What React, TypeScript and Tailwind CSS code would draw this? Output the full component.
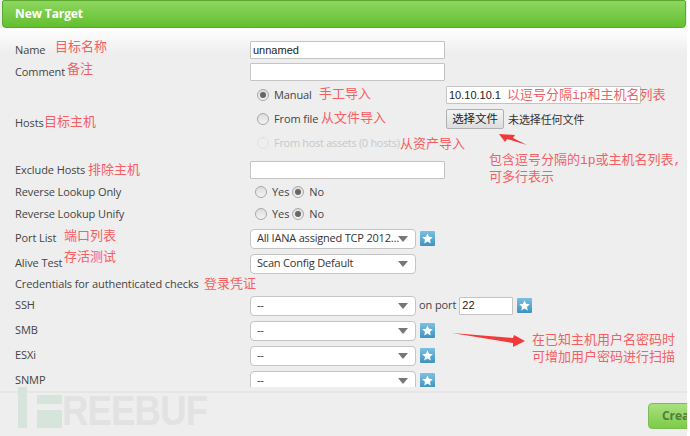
import type { ReactNode } from 'react';

const NOTES = [
  { text: '目标名称', x: 55, y: 40 },
  { text: '备注', x: 67, y: 62 },
  { text: '目标主机', x: 44, y: 115 },
  { text: '手工导入', x: 319, y: 87 },
  { text: '从文件导入', x: 321, y: 111 },
  { text: '从资产导入', x: 400, y: 137 },
  { text: '以逗号分隔ip和主机名列表', x: 507, y: 88 },
  { text: '包含逗号分隔的ip或主机名列表,', x: 489, y: 153 },
  { text: '可多行表示', x: 489, y: 170 },
  { text: '排除主机', x: 88, y: 163 },
  { text: '端口列表', x: 64, y: 229 },
  { text: '存活测试', x: 64, y: 250 },
  { text: '登录凭证', x: 204, y: 277 },
  { text: '在已知主机用户名密码时', x: 532, y: 333 },
  { text: '可增加用户密码进行扫描', x: 532, y: 350 },
];

function Row({ label, className, children }: { label: string; className: string; children?: ReactNode }) {
  return (
    <div className={`flex items-center ${className}`}>
      <div className="w-[235px] shrink-0">{label}</div>
      {children}
    </div>
  );
}

function TextBox({ value, className = 'w-[195px]' }: { value?: string; className?: string }) {
  return (
    <div className={`h-[18px] bg-white border border-[#c4c4c4] rounded-[1px] pl-[2px] flex items-center text-[11px] tracking-normal text-[#222] font-['Liberation_Sans',sans-serif] ${className}`}>
      {value}
    </div>
  );
}

function Radio({ on, faint }: { on?: boolean; faint?: boolean }) {
  return (
    <span
      className={`w-[12px] h-[12px] rounded-full border flex items-center justify-center shrink-0 ${
        faint ? 'border-[#e2e2e2] bg-[#eee]' : 'border-[#a8a8a8] bg-gradient-to-b from-[#dcdcdc] to-[#f4f4f4]'
      }`}
    >
      {on && <span className="w-[6px] h-[6px] rounded-full bg-[#666]" />}
    </span>
  );
}

function YesNo() {
  return (
    <div className="flex items-center ml-[5px]">
      <Radio />
      <span className="ml-[5px]">Yes</span>
      <span className="ml-[3px]"><Radio on /></span>
      <span className="ml-[5px]">No</span>
    </div>
  );
}

function Dropdown({ value }: { value: string }) {
  return (
    <div className="relative w-[166px] h-[20px] bg-white border border-[#c4c4c4] rounded-[4px] pl-[6px] flex items-center whitespace-nowrap text-[#333]">
      <span className="w-[144px] truncate tracking-[-0.2px]">{value}</span>
      <span className="absolute right-[7px] top-[6px] w-0 h-0 border-x-[5px] border-x-transparent border-t-[6px] border-t-[#777]" />
    </div>
  );
}

function StarButton() {
  return (
    <span className="w-[15px] h-[15px] ml-[4px] rounded-[1px] bg-gradient-to-b from-[#7cc0e2] to-[#3c93bf] flex items-center justify-center shrink-0">
      <svg width="11" height="11" viewBox="0 0 24 24" fill="#fff">
        <polygon points="12,1 15.4,8.4 23.5,9.3 17.5,14.8 19.1,22.8 12,18.8 4.9,22.8 6.5,14.8 0.5,9.3 8.6,8.4" />
      </svg>
    </span>
  );
}

export default function App() {
  return (
    <div className="relative w-[690px] h-[436px] overflow-hidden bg-white text-[#444] text-[11px] tracking-[-0.1px] font-['Open_Sans','Noto_Sans',sans-serif]">
      <div className="w-[687px] h-full overflow-hidden bg-[#eeeeee]">
        <div className="ml-[2px] h-[28px] w-[684px] rounded-[4px] rounded-t-[2px] border border-[#5aa82e] bg-gradient-to-b from-[#8ed65f] to-[#62c02c] pl-[12px] flex items-center text-white font-bold text-[12px]">
          New Target
        </div>

        <div className="h-[359px] overflow-hidden pl-[15px] pt-[11px] bg-gradient-to-b from-white to-[#eeeeee] to-[7%]">
          <Row label="Name" className="h-[22px]"><TextBox value="unnamed" /></Row>
          <Row label="Comment" className="h-[22px]"><TextBox /></Row>

          <div className="flex h-[72px]">
            <div className="w-[235px] shrink-0 pt-[32px]">Hosts</div>
            <div className="relative flex-1">
              <div className="flex items-center h-[24px] ml-[7px]">
                <Radio on />
                <span className="ml-[5px] w-[172px]">Manual</span>
                <TextBox value="10.10.10.1" className="w-[195px]" />
              </div>
              <div className="flex items-center h-[24px] ml-[7px]">
                <Radio />
                <span className="ml-[5px] w-[172px]">From file</span>
                <div className="h-[20px] w-[58px] border border-[#b0b0b0] rounded-[2px] bg-gradient-to-b from-[#f4f4f4] to-[#dddddd] flex items-center justify-center text-[11.5px] text-[#222] font-['Noto_Sans_CJK_SC',sans-serif]">
                  选择文件
                </div>
                <span className="ml-[4px] text-[#333] font-['Noto_Sans_CJK_SC',sans-serif]">未选择任何文件</span>
              </div>
              <div className="flex items-center h-[24px] ml-[7px] text-[#c8c8c8]">
                <Radio faint />
                <span className="ml-[5px] tracking-[-0.3px]">From host assets (0 hosts)</span>
              </div>
            </div>
          </div>

          <Row label="Exclude Hosts" className="h-[22px] mt-[4px]"><TextBox /></Row>
          <Row label="Reverse Lookup Only" className="h-[22px]"><YesNo /></Row>
          <Row label="Reverse Lookup Unify" className="h-[22px]"><YesNo /></Row>
          <Row label="Port List" className="h-[25px] mt-[1px]">
            <Dropdown value="All IANA assigned TCP 2012-02-10" />
            <StarButton />
          </Row>
          <Row label="Alive Test" className="h-[25px]"><Dropdown value="Scan Config Default" /></Row>
          <div className="h-[17px] flex items-center">Credentials for authenticated checks</div>
          <Row label="SSH" className="h-[25px]">
            <Dropdown value="--" />
            <span className="ml-[3px] mr-[3px]">on port</span>
            <TextBox value="22" className="w-[54px]" />
            <StarButton />
          </Row>
          <Row label="SMB" className="h-[25px]"><Dropdown value="--" /><StarButton /></Row>
          <Row label="ESXi" className="h-[25px]"><Dropdown value="--" /><StarButton /></Row>
          <Row label="SNMP" className="h-[25px]"><Dropdown value="--" /><StarButton /></Row>
        </div>

        <div className="relative mt-[4px] h-[45px] border-t-2 border-[#e6e6e6]">
          <div className="absolute left-[18px] -top-[6px] flex items-start">
            <svg width="44" height="42" viewBox="0 0 44 42" fill="#d6e4dc" className="shrink-0">
              <rect x="0" y="0" width="9" height="41" />
              <rect x="19" y="8" width="25" height="9" />
              <rect x="19" y="23" width="25" height="18" />
            </svg>
            <span className="mt-[2px] origin-left scale-x-[0.85] text-[#e2e2e2] font-bold text-[43px] leading-[42px] tracking-[-1px] font-['Liberation_Sans',sans-serif]">
              REEBUF
            </span>
          </div>
          <div className="absolute left-[648px] top-[10px] w-[50px] h-[26px] rounded-[4px] border border-[#7dbb55] bg-gradient-to-b from-[#a9e07f] to-[#7ccb45] pl-[13px] flex items-center text-[#4f7f3a] font-bold text-[12px]">
            Crea
          </div>
        </div>
      </div>

      {NOTES.map(n => (
        <span
          key={n.text}
          className="absolute whitespace-nowrap text-[13px] leading-[16px] tracking-normal text-[#f55f64] font-['Liberation_Mono','Noto_Sans_CJK_SC',monospace]"
          style={{ left: n.x, top: n.y }}
        >
          {n.text}
        </span>
      ))}

      <svg className="absolute left-0 top-0 pointer-events-none" width="690" height="436" fill="#f23a3a">
        <polygon points="499,134 515,135 513,138 527,145 507,139 505,142" />
        <polygon points="452,333 513,338 514,335 525,341 513,347 513,343" />
      </svg>
    </div>
  );
}
